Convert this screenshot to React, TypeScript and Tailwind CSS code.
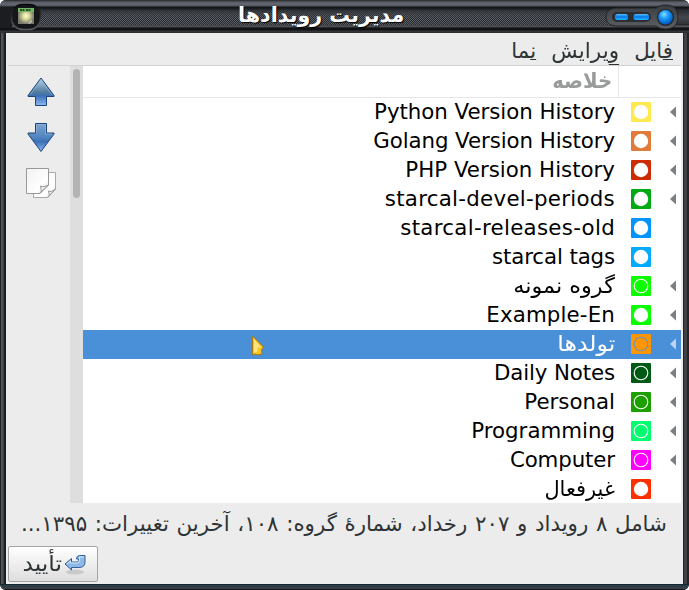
import React from "react";

type Row = { label: string; color: string; ring?: string; expandable?: boolean; selected?: boolean; stretch?: string };

const rows: Row[] = [
  { label: "Python Version History", color: "#ffe94f", expandable: true, stretch: "tracking-[-0.04px]" },
  { label: "Golang Version History", color: "#e07b39", expandable: true, stretch: "tracking-[-0.08px]" },
  { label: "PHP Version History", color: "#cc2c00", expandable: true },
  { label: "starcal-devel-periods", color: "#00aa14", expandable: true, stretch: "tracking-[0.28px]" },
  { label: "starcal-releases-old", color: "#0094ff", stretch: "tracking-[0.3px]" },
  { label: "starcal tags", color: "#00aaff", stretch: "tracking-[-0.12px]" },
  { label: "گروه نمونه", color: "#0cff00", ring: "#ffffff", expandable: true, stretch: "origin-right scale-x-[1.05]" },
  { label: "Example-En", color: "#0cff00", expandable: true, stretch: "tracking-[0.15px]" },
  { label: "تولدها", color: "#ff9500", ring: "#6f93b0", expandable: true, selected: true, stretch: "origin-right scale-x-[1.11]" },
  { label: "Daily Notes", color: "#005a14", ring: "#ffffff", expandable: true, stretch: "tracking-[-0.12px]" },
  { label: "Personal", color: "#1ba000", ring: "#ffffff", expandable: true },
  { label: "Programming", color: "#00ff6e", ring: "#ffffff", expandable: true },
  { label: "Computer", color: "#ff00ff", ring: "#ffffff", expandable: true, stretch: "tracking-[-0.12px]" },
  { label: "غیرفعال", color: "#ff2f00", stretch: "origin-right scale-x-[.98]" },
];

function TitleBar() {
  return (
    <header className="relative h-[33px] shrink-0 bg-[linear-gradient(180deg,#25272b_0px,#3d4046_1px,#565961_2px,#666973_4px,#51545c_6px,#101113_7px,#15171a_8px,#292c30_10px,#45484e_17px,#303338_24px,#191b1d_25px,#66696e_26px,#3b3e42_27px,#111214_28px,#111214_30px,#35373a_31px,#292b2e_33px)]">
      <div className="absolute left-10 right-[75px] top-[9px] h-4 bg-[repeating-conic-gradient(#5c5f66_0_25%,#26292d_0_50%)] bg-[length:2px_2px] [mask-image:linear-gradient(transparent,#000_50%,#000)]" />
      <svg className="absolute inset-0" width="689" height="33">
        <defs>
          <radialGradient id="blue" cx=".4" cy=".3" r=".7">
            <stop offset="0" stopColor="#8ae0ff" />
            <stop offset=".4" stopColor="#1f9fff" />
            <stop offset="1" stopColor="#0058c0" />
          </radialGradient>
          <linearGradient id="pill" x1="0" y1="0" x2="0" y2="1">
            <stop offset="0" stopColor="#58c0f8" />
            <stop offset=".45" stopColor="#0a78e8" />
            <stop offset="1" stopColor="#20b4ff" />
          </linearGradient>
          <linearGradient id="rim" x1="0" y1="0" x2="0" y2="1">
            <stop offset="0" stopColor="#050607" />
            <stop offset="1" stopColor="#5d6064" />
          </linearGradient>
          <linearGradient id="plate" x1="0" y1="0" x2="0" y2="1">
            <stop offset="0" stopColor="#3a3d41" />
            <stop offset="1" stopColor="#5c5f64" />
          </linearGradient>
          <radialGradient id="glow">
            <stop offset="0" stopColor="#ffffcf" />
            <stop offset=".35" stopColor="#e1e1a0" />
            <stop offset="1" stopColor="#77796c" />
          </radialGradient>
        </defs>
        <rect x="0" y="7" width="12" height="21" fill="#1b1d20" />
        <rect x="11.5" y="4.5" width="29" height="25" rx="11" fill="#151618" stroke="url(#rim)" strokeWidth="1.5" />
        <rect x="18" y="8" width="16" height="16" fill="url(#glow)" />
        <rect x="18" y="8" width="16" height="4" fill="#70b763" />
        <path d="M20 10h5m1 0h5" stroke="#172b16" strokeWidth="1.4" strokeDasharray="2 .5" />
        <path d="m28 23 4-3v2l-3 2z" fill="#bfc0b5" />
        <path d="M617 8h39c5-4 14-4 19 0 4 5 4 13 0 18-5 4-14 4-19 0h-39c-8 0-11-4-11-9s3-9 11-9Z" fill="url(#plate)" stroke="#222427" strokeWidth="1" />
        <rect x="612" y="12" width="39" height="10" rx="5" fill="#2b2e32" />
        <rect x="615" y="14" width="13" height="6" rx="2.5" fill="url(#pill)" />
        <rect x="633.5" y="14" width="15.5" height="6" rx="2.5" fill="url(#pill)" />
        <circle cx="665.5" cy="17.3" r="8.6" fill="#262a30" />
        <circle cx="665.5" cy="17.3" r="7.2" fill="url(#blue)" />
      </svg>
      <h1 className="absolute left-[238px] top-[3px] text-[20.67px] leading-6 font-bold text-white whitespace-nowrap [text-shadow:1px_1px_1px_#000]">مدیریت رویدادها</h1>
    </header>
  );
}

function Arrow({ down }: { down?: boolean }) {
  return (
    <svg width="28" height="30" viewBox="0 0 28 30">
      <defs>
        <linearGradient id={down ? "down" : "up"} x1="0" y1="0" x2="0" y2="1">
          <stop offset="0" stopColor={down ? "#81a4cd" : "#b9d8eb"} />
          <stop offset=".52" stopColor={down ? "#4e82bd" : "#527b9e"} />
          <stop offset=".65" stopColor="#3c70b6" />
          <stop offset="1" stopColor="#8fb8f0" />
        </linearGradient>
      </defs>
      <path
        d={down ? "M8.5 1.5h11v9.5H27v1L14 29.5 1 12v-1h7.5Z" : "M14 1 27 18.5v1h-7.5v9h-11v-9H1v-1Z"}
        fill={down ? "url(#down)" : "url(#up)"}
        stroke="#1c447c"
        strokeLinejoin="round"
      />
      <path d={down ? "M9.5 11V2.5h9V12h6.5" : "m3 18 11-15 11 15"} fill="none" stroke="#91b9dc" strokeOpacity=".65" />
    </svg>
  );
}

function Pages() {
  return (
    <svg width="32" height="32" viewBox="0 0 32 32">
      <defs>
        <linearGradient id="paper" x1="0" y1="0" x2="1" y2="1">
          <stop offset="0" stopColor="#f1f1f1" />
          <stop offset=".7" stopColor="#fff" />
          <stop offset="1" stopColor="#d7d7d7" />
        </linearGradient>
      </defs>
      <path d="M8.5 5.5h22V22L23 30.5H8.5Z" fill="url(#paper)" stroke="#aaa" />
      <path d="M23 30c2-2 1-3 .5-6 2 1 4 .5 7-2Z" fill="#eee" stroke="#999" />
      <path d="M1.5 1.5h22V18L15 26.5H1.5Z" fill="url(#paper)" stroke="#999" />
      <path d="M15 26c2-2 1-4 .5-7 2 1 5 .5 8-1Z" fill="#eee" stroke="#999" />
    </svg>
  );
}

function EventRow({ row }: { row: Row }) {
  return (
    <div className={`flex h-[29px] shrink-0 items-start pr-[5px] ${row.selected ? "bg-[#4a90d9] text-white" : "text-black"}`}>
      <svg width="6" height="12" className="mt-2 shrink-0">
        {row.expandable && <path d="M6 .5v11L0 6Z" fill={row.selected ? "#bdd7f2" : "#7b7f80"} />}
      </svg>
      <svg width="20" height="20" className="mt-1 mr-[19px] shrink-0">
        <rect width="20" height="20" rx="1" fill={row.color} />
        <circle cx="10" cy="10" r={row.ring ? 6.8 : 7.2} fill={row.ring ? "none" : "white"} stroke={row.ring ?? "none"} strokeWidth="1.1" />
      </svg>
      <span dir="auto" className={`-mt-px mr-4 whitespace-nowrap ${row.stretch ?? ""}`}>{row.label}</span>
    </div>
  );
}

export default function App() {
  return (
    <div dir="rtl" className="relative flex h-[590px] w-[689px] flex-col overflow-hidden rounded-[6px] bg-[#292c30] font-['DejaVu_Sans',sans-serif] text-[21.33px] leading-[29px] text-[#2e3436]">
      <TitleBar />
      <div className="flex h-[551px] shrink-0 bg-[linear-gradient(90deg,#202226_0_1px,#50535a_1px_3px,#3a3d43_3px_4px,#1b1d20_4px_6px,#1b1d20_6px_683px,#202225_683px_684px,#3f4145_684px_687px,#222427_687px)] px-[6px]">
        <main className="flex w-full flex-col bg-[#ececec] px-[2px]">
          <nav className="flex h-[33px] shrink-0 gap-4 border-b border-[#d3d3d3] pr-2 pt-[3px]">
            <span><span className="underline decoration-1 underline-offset-1 [text-decoration-skip-ink:none]">ف</span>ایل</span>
            <span className="-mr-px origin-right scale-x-[1.01]"><span className="underline decoration-1 underline-offset-[6px] [text-decoration-skip-ink:none]">و</span>یرایش</span>
            <span><span className="underline decoration-1 underline-offset-1 [text-decoration-skip-ink:none]">ن</span>ما</span>
          </nav>
          <div className="flex h-[437px] shrink-0">
            <section className="flex min-w-0 grow flex-col overflow-hidden bg-white">
              <div className="flex h-8 shrink-0 border-b border-[#e7e7e7] font-bold text-[#999c9b]">
                <div className="w-[63px] border-l border-[#e7e7e7]" />
                <span className="mr-[6px] origin-right scale-x-[.92]">خلاصه</span>
              </div>
              {rows.map((row) => <EventRow key={row.label} row={row} />)}
            </section>
            <div className="w-[13px] shrink-0 bg-[#dedede] px-[3px] pt-[3px]">
              <div className="h-[129px] w-[7px] rounded-full bg-[#b3b4b6]" />
            </div>
            <aside className="flex w-[62px] shrink-0 flex-col items-center gap-[15px] pt-[11px] pl-1">
              <Arrow />
              <Arrow down />
              <Pages />
            </aside>
          </div>
          <p className="h-[43px] shrink-0 whitespace-nowrap pr-[14px] pt-[6px] [word-spacing:0.9px]">شامل ۸ رویداد و ۲۰۷ رخداد، شمارهٔ گروه: ۱۰۸، آخرین تغییرات: ۱۳۹۵...</p>
          <div className="flex justify-end">
            <button className="flex h-9 w-[90px] items-center rounded-[2px] border border-[#a4a4a4] bg-linear-to-b from-white to-[#dedede] pr-[11px]">
              <svg width="22" height="22" viewBox="0 0 22 22" className="shrink-0">
                <ellipse cx="11" cy="19" rx="9" ry="2.5" fill="#888" opacity=".3" />
                <path d="M1 11 7.5 5.5V9H13q1.500 0 1.500-1.500V6h-2q0-3.500 3-3.500H21V9q0 5.500-6 5.500H7.500V17Z" fill="#8eb9e5" stroke="#315f9c" strokeLinejoin="round" />
                <path d="m3 11 3.500-3v2H13q2.500 0 2.500-3V4H20" fill="none" stroke="#d4e8fc" />
              </svg>
              <span className="-mt-0.5 mr-0.5 origin-right scale-x-[1.1]">تأیید</span>
            </button>
          </div>
        </main>
      </div>
      <footer className="h-[6px] bg-[linear-gradient(180deg,#14252e_0_1px,#293e48_1px_3px,#3a3e42_3px_5px,#15181a_5px)]" />
      <svg className="absolute left-[251px] top-[335px]" width="15" height="22" viewBox="0 0 15 22">
        <path d="M1.5 1 12.5 12l-2 3 .5 4-4 1-3-1-2.5 1Z" fill="#f9c51e" stroke="#a87713" />
        <path d="m3 4 7 8-3 1-1 4-3 1Z" fill="#ffe477" />
      </svg>
    </div>
  );
}
